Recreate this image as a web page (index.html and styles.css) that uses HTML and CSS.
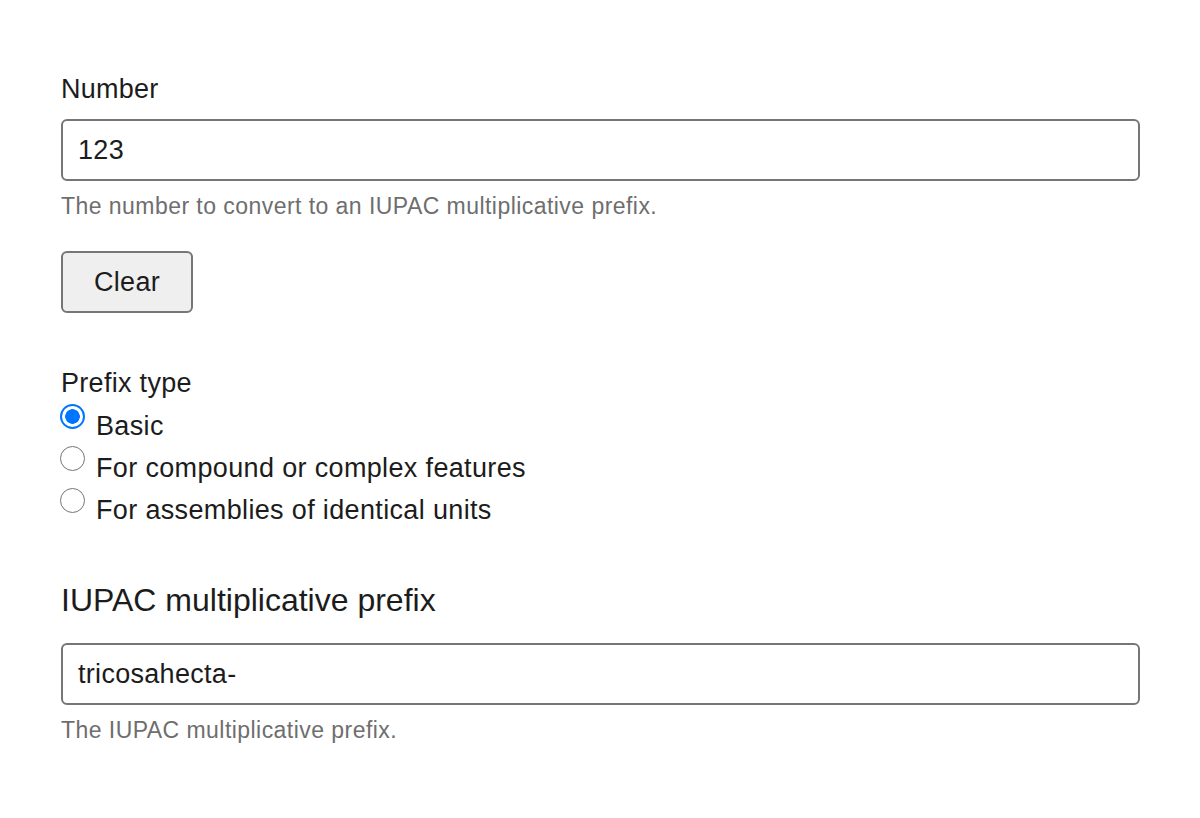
FILE: index.html
```html
<!DOCTYPE html>
<html lang="en">
<head>
<meta charset="utf-8">
<title>IUPAC multiplicative prefix</title>
<link rel="stylesheet" href="styles.css">
</head>
<body>
<main class="page">
  <section class="input-section">
    <label class="label" for="number">Number</label>
    <input class="field" id="number" type="text" value="123">
    <div class="help">The number to convert to an IUPAC multiplicative prefix.</div>
    <button class="btn" type="button">Clear</button>
    <fieldset class="group">
      <legend class="legend">Prefix type</legend>
      <label class="option"><input class="radio" type="radio" name="ptype" checked><span class="option-text">Basic</span></label>
      <label class="option"><input class="radio" type="radio" name="ptype"><span class="option-text">For compound or complex features</span></label>
      <label class="option"><input class="radio" type="radio" name="ptype"><span class="option-text">For assemblies of identical units</span></label>
    </fieldset>
  </section>
  <section class="output-section">
    <h2 class="heading">IUPAC multiplicative prefix</h2>
    <input class="field field-out" type="text" value="tricosahecta-" readonly>
    <div class="help">The IUPAC multiplicative prefix.</div>
  </section>
</main>
</body>
</html>
```
FILE: styles.css
```css
html, body {
  margin: 0;
  padding: 0;
  background: #ffffff;
}
body {
  font-family: "Liberation Sans", Arial, Helvetica, sans-serif;
  color: #1c1c1c;
}
.page {
  padding: 70px 60px 0 61px;
}
.label {
  display: block;
  font-size: 27px;
  line-height: 39px;
  letter-spacing: 0.25px;
}
.field {
  display: block;
  box-sizing: border-box;
  width: 100%;
  height: 62px;
  margin: 10px 0 0 0;
  padding: 0 15px;
  border: 2px solid #767676;
  border-radius: 6px;
  background: #ffffff;
  color: #1c1c1c;
  font-family: "Liberation Sans", Arial, sans-serif;
  font-size: 27px;
  letter-spacing: 0.3px;
  outline: none;
}
.help {
  margin-top: 10px;
  font-size: 23px;
  line-height: 30px;
  letter-spacing: 0.45px;
  color: #6e6e6e;
}
.btn {
  display: block;
  box-sizing: border-box;
  margin-top: 30px;
  width: 132px;
  height: 62px;
  padding: 0;
  border: 2px solid #767676;
  border-radius: 6px;
  background: #efefef;
  color: #1c1c1c;
  font-family: "Liberation Sans", Arial, sans-serif;
  font-size: 27px;
  letter-spacing: 0.3px;
}
.group {
  margin: 51px 0 0 0;
  padding: 0;
  border: 0;
  min-width: 0;
}
.legend {
  padding: 0;
  font-size: 27px;
  line-height: 39px;
  letter-spacing: 0.3px;
  float: left;
  width: 100%;
}
.option {
  clear: both;
  box-sizing: border-box;
  display: flex;
  align-items: flex-start;
  height: 42px;
  padding-top: 1px;
  font-size: 27px;
  line-height: 40px;
  letter-spacing: 0.35px;
}
.option-text {
  margin-top: 2px;
}
.radio {
  appearance: none;
  -webkit-appearance: none;
  box-sizing: border-box;
  flex: none;
  width: 25px;
  height: 25px;
  margin: 0 11px 0 -1px;
  border: 1.5px solid #767676;
  border-radius: 50%;
  background: #ffffff;
}
.radio:checked {
  border: 2px solid #0075ff;
  background: radial-gradient(circle, #0075ff 0 7px, #ffffff 7.5px);
}
.heading {
  margin: 53px 0 0 0;
  font-size: 32px;
  line-height: 37px;
  font-weight: 400;
  letter-spacing: 0;
}
.field-out {
  margin-top: 24px;
}
```
